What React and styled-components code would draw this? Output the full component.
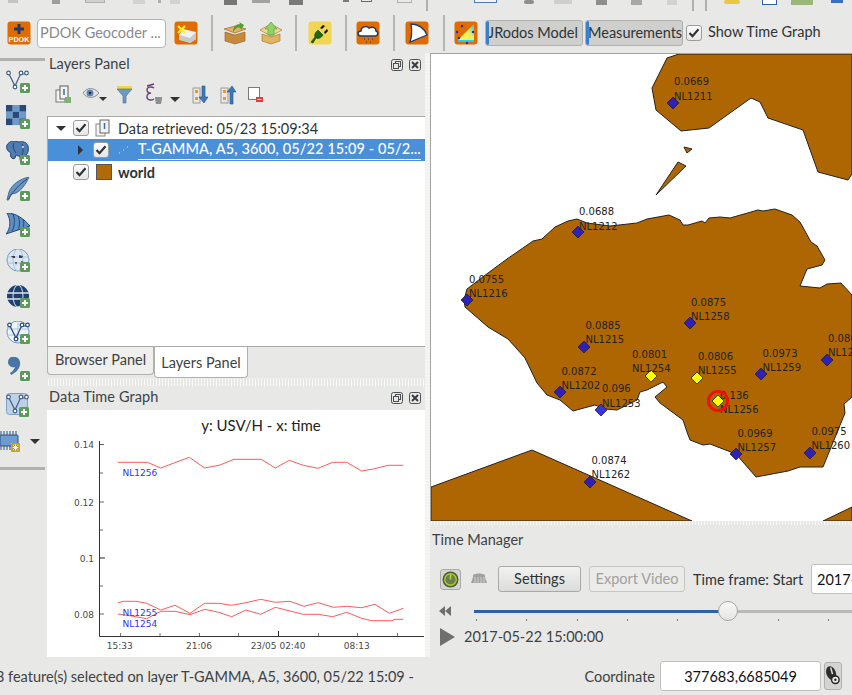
import React from 'react';
import styled, { createGlobalStyle } from 'styled-components';

const UI = '"Lato", "Open Sans", sans-serif';

const GlobalStyle = createGlobalStyle`
  html, body { margin: 0; padding: 0; background: #e8e8e7; }
  * { box-sizing: border-box; }
  body { font-family: ${UI}; font-size: 14.5px; color: #2e3436; }
`;

const Page = styled.div`
  width: 852px; height: 695px; display: flex; flex-direction: column;
  overflow: hidden; background: #e8e8e7;
`;

/* ---------- clipped toolbar on top ---------- */
const TopStrip = styled.div`
  height: 13px; display: flex; align-items: flex-start; overflow: hidden; flex: none;
`;
const StripItem = styled.div`
  flex: none; margin-left: ${p => p.$ml}px; width: ${p => p.$w}px; height: ${p => p.$h || 5}px;
  background: ${p => p.$bg || 'transparent'};
  border: ${p => (p.$line ? `1px solid ${p.$line}` : 'none')};
  border-top: none;
  border-radius: ${p => p.$r || 0}px;
`;

/* ---------- main toolbar ---------- */
const MainBar = styled.div`
  height: 40px; flex: none; display: flex; align-items: center; padding-left: 7px; overflow: hidden;
`;
const IconSlot = styled.div`
  flex: none; width: 24px; height: 24px; margin-left: ${p => p.$ml || 0}px;
`;
const ToolIcon = styled.svg`
  flex: none; width: ${p => p.$w || 24}px; height: 24px; margin-left: ${p => p.$ml || 0}px; display: block;
`;
const GeoInput = styled.div`
  flex: none; width: 129px; height: 29px; margin: 0 8px 0 6px; padding: 0 0 1px 2px;
  background: #fff; border: 1px solid #b5b5b3; border-radius: 4px;
  display: flex; align-items: center; color: #8a8a8a; font-size: 14.5px; white-space: nowrap;
  overflow: hidden;
`;
const BarSep = styled.div`
  flex: none; width: 2px; height: 36px; background: #b6b6b4; margin-left: ${p => p.$ml}px;
`;
const ToggleButton = styled.div`
  flex: none; width: 98px; height: 26px; margin-left: ${p => p.$ml}px; position: relative;
  background: #cfcfce; border: 1px solid #b0b0ae; border-radius: 3px;
  font-size: 14.5px; line-height: 23px; padding-left: 2px; white-space: nowrap; overflow: hidden; color: #2e3436;
  &::before {
    content: ''; position: absolute; left: 0; top: 0; bottom: 0; width: 3px;
    background: #3a7fc9; border-radius: 2px;
  }
`;
const CheckBox = styled.div`
  flex: none; width: 16px; height: 16px; margin-left: ${p => p.$ml || 0}px;
  background: linear-gradient(#fbfbfb, #e6e6e5); border: 1px solid #9c9c9a; border-radius: 3px;
  display: flex; align-items: center; justify-content: center;
`;
const BarLabel = styled.span`
  margin: -3px 0 0 6px; white-space: nowrap; font-size: 14.5px; color: #2e3436;
`;

/* ---------- workspace ---------- */
const Workspace = styled.div`
  flex: 1; min-height: 0; display: flex;
`;
const SideBar = styled.div`
  width: 45px; flex: none; margin-right: 2px; padding-top: 5px; display: flex; flex-direction: column;
`;
const SideRule = styled.div`
  height: 3px; flex: none; background: #b0b0ae; margin-bottom: ${p => p.$mb}px; margin-top: ${p => p.$mt || 0}px;
`;
const SideIcons = styled.div`
  display: flex; flex-direction: column; gap: 12px; padding-left: 6px;
`;
const ChipRow = styled.div`
  display: flex; align-items: center; height: 24px; margin-left: -6px;
`;
const ArrowDown = styled.div`
  width: 0; height: 0; flex: none; margin-left: ${p => p.$ml || 0}px; align-self: center;
  border-left: ${p => p.$s || 5}px solid transparent; border-right: ${p => p.$s || 5}px solid transparent;
  border-top: ${p => p.$s || 5}px solid #2e3436;
`;

const DockColumn = styled.div`
  width: 378px; flex: none; display: flex; flex-direction: column;
`;
const DockHeader = styled.div`
  height: 24px; flex: none; display: flex; align-items: center; padding: 0 4px 0 2px; color: #3d4244;
`;
const DockTitle = styled.span`
  flex: 1; font-size: 14.5px; white-space: nowrap; margin-top: -3px; letter-spacing: .1px;
`;
const DockButton = styled.svg`
  width: 12px; height: 12px; flex: none; margin-left: ${p => p.$ml || 0}px;
`;
const LayerTools = styled.div`
  height: 39px; flex: none; display: flex; align-items: flex-start; padding: 5px 0 0 8px;
`;
const TreeBox = styled.div`
  height: 231px; flex: none; background: #fff; border: 1px solid #a9a9a7; border-right: none;
`;
const TreeRow = styled.div`
  height: 22px; display: flex; align-items: center; padding-left: ${p => p.$indent}px;
  background: ${p => (p.$selected ? '#4a90d9' : 'transparent')};
  color: ${p => (p.$selected ? '#fff' : '#2e3436')};
  white-space: nowrap; overflow: hidden;
`;
const TreeArrow = styled.div`
  width: 0; height: 0; flex: none;
  ${p => (p.$open
    ? 'border-left:5px solid transparent;border-right:5px solid transparent;border-top:5px solid #2e3436;'
    : 'border-top:5px solid transparent;border-bottom:5px solid transparent;border-left:5px solid #2e3436;')}
`;
const TreeText = styled.span`
  font-size: 14.5px; margin-left: ${p => p.$ml}px; font-weight: ${p => (p.$bold ? 700 : 400)};
`;
const SelectedText = styled.span`
  font-size: 14.5px; margin-left: 8px; width: 283px; line-height: 18px; height: 20px; letter-spacing: .1px;
  border-bottom: 1px solid #fff; overflow: hidden; font-weight: 500;
`;
const Swatch = styled.div`
  width: 16px; height: 16px; flex: none; margin-left: 7px; background: #b06a08; border: 1px solid #555;
`;
const TabBar = styled.div`
  height: 31px; flex: none; display: flex; align-items: flex-start;
`;
const Tab = styled.div`
  height: ${p => (p.$active ? 31 : 28)}px; width: ${p => p.$w}px; flex: none;
  background: ${p => (p.$active ? '#fff' : '#efefee')};
  border: 1px solid #b0b0ae; border-top: none; border-radius: 0 0 4px 4px;
  display: flex; align-items: center; justify-content: center; font-size: 14.5px; white-space: nowrap;
  color: #3d4244; padding-bottom: ${p => (p.$active ? 0 : 2)}px;
`;
const HSplit = styled.div`
  height: ${p => p.$h}px; flex: none;
  background-image: radial-gradient(#f7f7f6 0.8px, transparent 0.9px);
  background-size: 3px 2px;
`;
const VSplit = styled.div`
  width: 5px; flex: none;
  background-image: radial-gradient(#f7f7f6 0.8px, transparent 0.9px);
  background-size: 2px 3px;
`;
const GraphBox = styled.div`
  height: 247px; flex: none; background: #fff;
`;
const Drawing = styled.svg`
  display: block;
`;
const GraphTitle = styled.text`
  font-family: ${UI}; font-size: 15px; fill: #222;
`;
const GraphTick = styled.text`
  font-family: "DejaVu Sans", sans-serif; font-size: 9px; fill: #4a4a4a;
`;
const GraphLabel = styled.text`
  font-family: "DejaVu Sans", sans-serif; font-size: 9px; fill: #3232ff;
`;
const MapLabel = styled.text`
  font-family: "DejaVu Sans", sans-serif; font-size: 10px; fill: #222;
`;

/* ---------- right column ---------- */
const RightColumn = styled.div`
  flex: 1; min-width: 0; display: flex; flex-direction: column; overflow: hidden;
`;
const MapFrame = styled.div`
  height: 468px; flex: none; background: #fff;
  border-top: 1px solid #a4a4a2; border-left: 1px solid #a4a4a2; overflow: hidden;
`;
const TimeManager = styled.div`
  flex: 1; min-height: 0; display: flex; flex-direction: column;
`;
const TimeTitle = styled.div`
  height: 30px; flex: none; display: flex; align-items: center; padding: 0 0 2px 2px; font-size: 14.5px; color: #3d4244;
`;
const TimeRow = styled.div`
  height: 30px; flex: none; margin-top: 9px; display: flex; align-items: center; padding-left: 10px; white-space: nowrap;
`;
const PowerButton = styled.div`
  width: 21px; height: 21px; flex: none; background: #d4d4d2; border: 1px solid #aaa; border-radius: 3px;
  display: flex; align-items: center; justify-content: center;
`;
const PushButton = styled.div`
  height: 26px; flex: none; width: ${p => p.$w}px; margin-left: ${p => p.$ml}px;
  border: 1px solid ${p => (p.$disabled ? '#c6c6c4' : '#a9a9a7')}; border-radius: 3px;
  background: ${p => (p.$disabled ? '#ebebea' : 'linear-gradient(#f2f2f1, #dcdcda)')};
  color: ${p => (p.$disabled ? '#a0a0a0' : '#2e3436')};
  display: flex; align-items: center; justify-content: center; font-size: 14.5px; padding-bottom: 1px;
`;
const TimeLabel = styled.span`
  margin-left: 8px; font-size: 14.5px; color: #2e3436; width: 111px; flex: none;
`;
const DateInput = styled.div`
  flex: none; width: 100px; height: 30px; margin-left: 7px; background: #fff;
  border: 1px solid #c0c0be; border-radius: 3px; display: flex; align-items: center; padding-left: 5px; font-size: 14.5px; color: #111;
`;
const SliderRow = styled.div`
  height: 32px; flex: none; padding-left: 9px; padding-top: 12px;
`;
const SliderLine = styled.div`
  display: flex; align-items: center; height: 10px;
`;
const Track = styled.div`
  flex: 1; margin-left: 23px; height: 3px; position: relative; background: #b9b9b7;
`;
const TrackFill = styled.div`
  height: 3px; width: ${p => p.$w}px; background: #2c63a8;
`;
const Handle = styled.div`
  position: absolute; left: ${p => p.$x}px; top: -9px; width: 20px; height: 20px; border-radius: 50%;
  background: linear-gradient(#f8f8f7, #e4e4e3); border: 1px solid #a6a6a4;
`;
const Ticks = styled.div`
  display: flex; gap: 49.3px; margin: 3px 0 0 37px;
`;
const Tick = styled.div`
  width: 1px; height: 2px; flex: none; background: #777;
`;
const PlayRow = styled.div`
  height: 21px; flex: none; display: flex; align-items: center; padding-left: 10px;
`;
const PlayTriangle = styled.div`
  width: 0; height: 0; flex: none; margin-right: 9px;
  border-top: 9px solid transparent; border-bottom: 9px solid transparent; border-left: 15px solid #6f6f6d;
`;
const TimeStamp = styled.span`
  font-size: 14.5px; color: #3d4244; white-space: nowrap; margin-top: -1px;
`;

/* ---------- status ---------- */
const StatusBar = styled.div`
  height: 38px; flex: none; display: flex; align-items: center; padding-right: 10px; white-space: nowrap; overflow: hidden;
`;
const StatusText = styled.span`
  margin-left: -4px; font-size: 14.5px; color: #3d4244;
`;
const CoordLabel = styled.span`
  margin-left: auto; font-size: 14.5px; color: #3d4244;
`;
const CoordInput = styled.div`
  width: 161px; height: 30px; margin: 0 3px 0 5px; flex: none; background: #fff;
  border: 1px solid #c0c0be; border-radius: 3px; display: flex; align-items: center; justify-content: center;
  font-size: 14.5px; color: #111;
`;
const MouseButton = styled.div`
  width: 18px; height: 28px; flex: none; background: #d4d4d2; border: 1px solid #b0b0ae; border-radius: 3px;
  display: flex; align-items: center; justify-content: center;
`;

/* ---------- icons ---------- */
const Plus = ({ dx = 14, dy = 14 }) => (
  <g transform={`translate(${dx} ${dy})`}>
    <rect width="10" height="10" rx="1.5" fill="#5e9a5c" />
    <path d="M5 2v6M2 5h6" stroke="#fff" strokeWidth="2" />
  </g>
);
const VShape = ({ c = '#3f5f86' }) => (
  <g fill="none" stroke={c} strokeWidth="1.2">
    <path d="M3 5l6 12 5.5-12h5" />
    <circle cx="2.5" cy="4" r="1.8" fill="#fff" />
    <circle cx="9" cy="18" r="1.8" fill="#fff" />
    <circle cx="15" cy="4" r="1.8" fill="#fff" />
    <circle cx="20.5" cy="4" r="1.8" fill="#fff" />
  </g>
);
const Side = ({ children }) => <ToolIcon viewBox="0 0 24 24">{children}</ToolIcon>;
const IconV = () => <Side><VShape /><Plus /></Side>;
const IconRaster = () => (
  <Side>
    {[0, 1, 2].flatMap(r => [0, 1, 2].map(c => (
      <rect key={`${r}${c}`} x={c * 6.7} y={r * 6.7} width="6.7" height="6.7"
        fill={(r + c) % 2 === 0 ? '#274a78' : '#6d9acb'} />
    )))}
    <Plus />
  </Side>
);
const IconPg = () => (
  <Side>
    <path d="M7 0c3 0 5 1 6 1 3-1 8 0 9 4 1 4 0 7-2 9l-2 1c0 3 0 6-2 6s-2-3-2-6c-2 0-3 0-4-1l-1 3c-1 1-3 1-4-1-1-1 0-3-1-5C1 10 0 7 1 4c1-2 4-4 6-4z" fill="#4f7db2" stroke="#24436e" />
    <path d="M8 2c-2 4 0 7 2 10M16 3c2 4 1 8 0 11" stroke="#24436e" fill="none" />
    <circle cx="17" cy="6" r="1" fill="#dbe6f2" />
    <Plus />
  </Side>
);
const IconFeather = () => (
  <Side>
    <path d="M23 0C14 2 6 7 3 15l-2 8 1.5 0 2.5-6c7 0 13-6 18-17z" fill="#6b96c4" stroke="#2f5686" strokeWidth=".8" />
    <path d="M2.5 22C8 13 14 7 21 2" stroke="#23487c" fill="none" />
    <Plus />
  </Side>
);
const IconMesh = () => (
  <Side>
    <path d="M1 0c9 0 17 6 23 13L0 21C5 15 5 7 1 0z" fill="#5d8fc5" stroke="#23487c" />
    <path d="M7 1c2 5 2 12-1 17M12 3c2 4 2 10 0 14M17 6c1 3 1 6 0 9" stroke="#23487c" fill="none" />
    <Plus />
  </Side>
);
const IconWms = () => (
  <Side>
    <circle cx="12" cy="11" r="11" fill="#dce7f3" stroke="#6d9acb" />
    <path d="M1 8h22M1 14h22" stroke="#a9c4e2" />
    <ellipse cx="12" cy="11" rx="5" ry="11" fill="none" stroke="#a9c4e2" />
    <path d="M5 7h4v2H7zM13 6l4 1-1 2h-3zM9 13h2l-1 3zM15 12h2l-1 2z" fill="#3b4046" />
    <Plus dy={13} />
  </Side>
);
const IconGlobe = () => (
  <Side>
    <circle cx="12" cy="11" r="11" fill="#1f3f6e" />
    <path d="M1 8h22M1 14h22" stroke="#d8e4f2" strokeWidth="1.5" />
    <ellipse cx="12" cy="11" rx="5" ry="11" fill="none" stroke="#d8e4f2" />
    <Plus dy={13} />
  </Side>
);
const IconWfs = () => (
  <Side>
    <circle cx="12" cy="11" r="11" fill="#eef4fa" stroke="#6d9acb" />
    <path d="M1 8h22M1 14h22M12 0v22" stroke="#a9c4e2" />
    <g transform="translate(1 0)"><VShape c="#23487c" /></g>
    <Plus dy={13} />
  </Side>
);
const IconComma = () => (
  <Side>
    <path d="M6 0c5-1 9 2 8 8-1 5-5 8-9 10l-1-2c2-1 4-3 5-6C6 11 2 9 2 5c0-3 2-5 4-5z" fill="#4a74a5" />
    <Plus dy={14} />
  </Side>
);
const IconVBox = () => (
  <Side>
    <rect x=".5" y=".5" width="21" height="21" rx="3" fill="#bcd0e6" stroke="#7f9fc4" />
    <VShape c="#3f5f86" />
    <Plus dy={14} dx={13} />
  </Side>
);
const IconChip = () => (
  <ToolIcon $w={26} viewBox="0 0 26 24">
    <rect x="0" y="6" width="18" height="11" rx="1" fill="#6c9bd0" stroke="#2c507f" />
    <path d="M1 2v4M4 2v4M7 2v4M10 2v4M13 2v4M16 2v4M1 17v4M4 17v4M7 17v4M10 17v4M13 17v4" stroke="#2c507f" />
    <rect x="11" y="14" width="9" height="9" rx="1" fill="#cfa11c" />
    <path d="M15.5 15.5v6M12.7 18.5h5.6M13.5 16.5l4 4M17.5 16.5l-4 4" stroke="#fff" />
  </ToolIcon>
);

const Orange = ({ fill = '#e06c00' }) => <rect x=".5" y=".5" width="23" height="23" rx="3" fill={fill} />;
const IconPdok = () => (
  <ToolIcon viewBox="0 0 24 24">
    <Orange />
    <path d="M12 3v10M7 8h10" stroke="#23386a" strokeWidth="3" />
    <text x="12" y="21" textAnchor="middle" fontFamily="Liberation Sans" fontWeight="700" fontSize="7.2" fill="#fff">PDOK</text>
  </ToolIcon>
);
const IconClear = () => (
  <ToolIcon viewBox="0 0 24 24">
    <Orange />
    <path d="M5 14l4-6 13 3v7l-6 4z" fill="#f1f1f1" />
    <path d="M5 14l11 3 6-6v7l-6 4-11-3z" fill="#c9c9c9" />
    <path d="M4 5l7 7M11 5l-7 7" stroke="#ffee22" strokeWidth="2.4" />
  </ToolIcon>
);
const IconBoxOpen = () => (
  <ToolIcon viewBox="0 0 24 24">
    <path d="M2 11l10 3 10-3v9l-10 3-10-3z" fill="#c78a3a" stroke="#8a5a1c" strokeWidth=".6" />
    <path d="M1 8l11-3 11 3-11 4z" fill="#e3b06a" stroke="#8a5a1c" strokeWidth=".6" />
    <path d="M10 11c0-5 3-8 7-8l-1-2 5 3-3 5-1-3c-3 0-5 2-7 5z" fill="#4ea02e" />
  </ToolIcon>
);
const IconBoxUp = () => (
  <ToolIcon viewBox="0 0 24 24">
    <path d="M3 13l9 3 9-3v7l-9 3-9-3z" fill="#e2b460" stroke="#9b6f24" strokeWidth=".6" />
    <path d="M1 9l11-6 11 6-11 6z" fill="#f4d48e" stroke="#9b6f24" strokeWidth=".6" />
    <path d="M12 1l6 7h-3v6H9V8H6z" fill="#8ed36a" stroke="#4c9a2c" strokeWidth=".6" />
  </ToolIcon>
);
const IconPlug = () => (
  <ToolIcon viewBox="0 0 24 24">
    <Orange fill="#f0d652" />
    <path d="M3 21l4-5c-1-3 1-5 3-7l5 5c-2 3-4 4-7 3l-3 5z" fill="#1c6a18" stroke="#0c3a0a" strokeWidth=".6" />
    <path d="M12 7l3-3 2 1-3 3zM16 11l3-3 1 2-3 3z" fill="#111" />
  </ToolIcon>
);
const IconCloud = () => (
  <ToolIcon viewBox="0 0 24 24">
    <Orange />
    <path d="M5 15c-4 0-4-5 0-5 0-4 5-6 8-3 4-2 7 0 7 3 3 1 2 5-1 5z" fill="#fff" stroke="#1d3a6e" strokeWidth="1.5" />
    <path d="M8 18h1M12 18h1M16 18h1M10 21h1M14 21h1" stroke="#1d3a6e" strokeWidth="1.2" />
  </ToolIcon>
);
const IconFan = () => (
  <ToolIcon viewBox="0 0 24 24">
    <Orange />
    <path d="M6 3c7 0 13 4 16 11L5 21C7 15 7 9 6 3z" fill="#fff" stroke="#1d3a6e" strokeWidth="1.3" />
  </ToolIcon>
);
const IconJRodos = () => (
  <ToolIcon viewBox="0 0 24 24">
    <defs>
      <linearGradient id="jr" x1="0" y1="1" x2="1" y2="0">
        <stop offset="0" stopColor="#ffff33" />
        <stop offset=".55" stopColor="#e8f060" />
        <stop offset="1" stopColor="#43b7e8" />
      </linearGradient>
    </defs>
    <Orange />
    <path d="M4 19L20 3v16z" fill="url(#jr)" />
    <path d="M4 19h16v2H4z" fill="#22ccff" />
    <g fill="#2a22c8">
      <circle cx="8" cy="5" r="1.2" /><circle cx="3" cy="11" r="1.2" /><circle cx="19" cy="11" r="1.2" />
      <circle cx="13" cy="22" r="1.2" /><circle cx="5" cy="17" r="1.2" />
    </g>
  </ToolIcon>
);
const Check = () => (
  <svg width="12" height="12" viewBox="0 0 12 12">
    <path d="M1.5 6l3 3.2 6-7" fill="none" stroke="#2e3436" strokeWidth="2.2" />
  </svg>
);
const FloatBtn = ({ ml }) => (
  <DockButton $ml={ml} viewBox="0 0 12 12">
    <rect x=".5" y=".5" width="11" height="11" rx="2" fill="none" stroke="#4c5052" />
    <rect x="4.5" y="2.5" width="5" height="5" fill="none" stroke="#4c5052" />
    <rect x="2.5" y="4.5" width="5" height="5" fill="#e8e8e7" stroke="#4c5052" />
  </DockButton>
);
const CloseBtn = ({ ml }) => (
  <DockButton $ml={ml} viewBox="0 0 12 12">
    <rect x=".5" y=".5" width="11" height="11" rx="2" fill="none" stroke="#4c5052" />
    <path d="M3 3l6 6M9 3l-6 6" stroke="#3a3d3f" strokeWidth="2" />
  </DockButton>
);
const IconGroup = ({ ml }) => (
  <ToolIcon $ml={ml} $w={16} viewBox="0 0 16 24">
    <rect x="1" y="8" width="9" height="12" fill="#f4f4f4" stroke="#777" />
    <rect x="5" y="4" width="8" height="13" fill="#f4f4f4" stroke="#5a5a5a" />
    <path d="M9 7v6" stroke="#3a6ea8" strokeWidth="1.5" />
    <rect x="10" y="15" width="6" height="6" fill="#7fb46e" />
  </ToolIcon>
);
const IconEye = ({ ml }) => (
  <ToolIcon $ml={ml} $w={16} viewBox="0 0 16 24">
    <path d="M0 11c4-6 11-6 16 0-5 6-12 6-16 0z" fill="#dfe5ea" stroke="#8a8f93" />
    <circle cx="7" cy="11" r="3.5" fill="#5f87b5" />
    <circle cx="7" cy="11" r="1.3" fill="#1f3040" />
  </ToolIcon>
);
const IconFilter = ({ ml }) => (
  <ToolIcon $ml={ml} $w={15} viewBox="0 0 15 24">
    <path d="M0 4h15v3H0z" fill="#f2d83c" />
    <path d="M0 7h15L9 14v7H6v-7z" fill="#6a9ac8" stroke="#3f6c9c" strokeWidth=".6" />
  </ToolIcon>
);
const IconEps = ({ ml }) => (
  <ToolIcon $ml={ml} $w={16} viewBox="0 0 16 24">
    <path d="M8 6C5 4 1 5 1 8c0 2 2 3 4 3-3 0-4 2-4 4 0 3 4 4 7 2M1 4l7-2" fill="none" stroke="#6a3c7c" strokeWidth="1.4" />
    <path d="M9 15h7v2l-1 5h-5l-1-5z" fill="#8e9194" />
  </ToolIcon>
);
const IconOrder = ({ ml, up }) => (
  <ToolIcon $ml={ml} $w={16} viewBox="0 0 16 24">
    <rect x="1" y="6" width="7" height="15" fill="none" stroke="#9a9a9a" />
    <rect x="3" y="8" width="3" height="3" fill="#e89a2c" /><rect x="3" y="15" width="3" height="3" fill="#e89a2c" />
    <path d={up ? 'M10 22V10H7l5-6 4 6h-3v12z' : 'M10 4v11H7l5 6 4-6h-3V4z'} fill="#3f78b8" stroke="#24507f" strokeWidth=".6" />
  </ToolIcon>
);
const IconNoSel = ({ ml }) => (
  <ToolIcon $ml={ml} $w={15} viewBox="0 0 15 24">
    <rect x=".5" y="5.5" width="11" height="12" fill="#fff" stroke="#7a7a7a" />
    <rect x="8" y="15" width="7" height="5" fill="#e23b3b" />
    <path d="M9.5 17.5h4" stroke="#fff" />
  </ToolIcon>
);
const IconPower = () => (
  <svg width="17" height="17" viewBox="0 0 17 17">
    <circle cx="8.5" cy="8.5" r="8" fill="#4e5a38" />
    <circle cx="8.5" cy="8.5" r="5.8" fill="#6f7b50" stroke="#a8d030" strokeWidth="1.4" />
    <path d="M8.5 3.5v5" stroke="#a8e030" strokeWidth="1.6" />
  </svg>
);
const IconArchive = ({ ml }) => (
  <ToolIcon $ml={ml} $w={18} viewBox="0 0 18 24">
    <path d="M3 8c3-2 9-2 12 0v2H3zM1 16l2-6h12l2 6z" fill="#a2a2a0" />
    <path d="M5 10v6M8 10v6M11 10v6M14 10v6" stroke="#d0d0ce" />
  </ToolIcon>
);
const IconRewind = () => (
  <svg width="12" height="10" viewBox="0 0 12 10">
    <path d="M6 0v10L0 5zM12 0v10L6 5z" fill="#6f6f6d" />
  </svg>
);
const IconMouse = () => (
  <svg width="17" height="24" viewBox="0 0 17 24">
    <ellipse cx="6.5" cy="9" rx="5" ry="7.5" transform="rotate(-20 6.5 9)" fill="#2d2d2d" />
    <path d="M6 3l2 7" stroke="#ddd" strokeWidth="1.6" />
    <circle cx="11" cy="16" r="4" fill="#eee" stroke="#222" strokeWidth="1.5" />
    <circle cx="11" cy="16" r="1.3" fill="#222" />
  </svg>
);

/* ---------- data ---------- */
const STRIP = [
  { ml: 8, w: 10, bg: '#c4c4c2', h: 3 }, { ml: 34, w: 8, bg: '#9e9e9c', h: 4 }, { ml: 25, w: 20, bg: '#d2d2d0', h: 3, line: '#b0b0ae' },
  { ml: 28, w: 12, bg: '#d2d2d0', h: 4 }, { ml: 13, w: 3, bg: '#b0b0ae', h: 3 }, { ml: 9, w: 10, bg: '#d2d2d0', h: 4 },
  { ml: 44, w: 13, bg: '#777775', h: 5 }, { ml: 15, w: 18, bg: '#a2a2a0', h: 3 }, { ml: 19, w: 14, bg: '#7a7a78', h: 5 },
  { ml: 40, w: 6, bg: '#7a7a78', h: 2 }, { ml: 12, w: 11, h: 2, line: '#6a6a68' }, { ml: 25, w: 15, h: 3, line: '#b0b0ae' },
  { ml: 14, w: 2, bg: '#b0b0ae', h: 11 },
  { ml: 46, w: 23, h: 3, line: '#4a7cc0', bg: '#f4f4f4' }, { ml: 27, w: 10, bg: '#8e8e8c', h: 4, r: 5 }, { ml: 20, w: 18, bg: '#cfcfcd', h: 4 },
  { ml: 24, w: 11, bg: '#8e8e8c', h: 5 }, { ml: 24, w: 11, bg: '#a8a8a6', h: 5 }, { ml: 25, w: 10, bg: '#d2d2d0', h: 5 },
  { ml: 15, w: 2, bg: '#b0b0ae', h: 11 }, { ml: 11, w: 2, bg: '#b0b0ae', h: 11 },
  { ml: 17, w: 16, bg: '#e8c840', h: 4, r: 3 }, { ml: 22, w: 15, h: 5, line: '#2e62a6', bg: '#fff' }, { ml: 14, w: 22, bg: '#9ab87a', h: 5 }, { ml: 18, w: 12, bg: '#3a6ec0', h: 3 },
];

const POINTS = [
  { n: 'NL1211', v: '0.0669', x: 673, y: 103, lx: 674, vy: 85, ny: 100 },
  { n: 'NL1212', v: '0.0688', x: 578, y: 232, lx: 579, vy: 214.5, ny: 229.5 },
  { n: 'NL1216', v: '0.0755', x: 467, y: 300, lx: 469, vy: 282.5, ny: 296.5 },
  { n: 'NL1215', v: '0.0885', x: 584, y: 347, lx: 585.5, vy: 328.5, ny: 342.5 },
  { n: 'NL1202', v: '0.0872', x: 560, y: 392, lx: 561.5, vy: 374.5, ny: 388.5 },
  { n: 'NL1253', v: '0.096', x: 601, y: 410, lx: 602, vy: 392, ny: 406.5, hi: true },
  { n: 'NL1254', v: '0.0801', x: 651, y: 376, lx: 632, vy: 357.5, ny: 371.5, yellow: true },
  { n: 'NL1262', v: '0.0874', x: 590, y: 482, lx: 591.5, vy: 464, ny: 478 },
  { n: 'NL1258', v: '0.0875', x: 690, y: 323, lx: 691, vy: 305.5, ny: 319.5 },
  { n: 'NL1255', v: '0.0806', x: 697, y: 378, lx: 698, vy: 360, ny: 374, yellow: true },
  { n: 'NL1259', v: '0.0973', x: 761, y: 374, lx: 762.5, vy: 356.5, ny: 370.5 },
  { n: 'NL1261', v: '0.0805', x: 827, y: 360, lx: 828, vy: 341.5, ny: 355.5 },
  { n: 'NL1256', v: '0.136', x: 718, y: 401, lx: 720, vy: 398.5, ny: 412.5, yellow: true, ring: true },
  { n: 'NL1257', v: '0.0969', x: 736, y: 454, lx: 737.5, vy: 436.5, ny: 450.5 },
  { n: 'NL1260', v: '0.0975', x: 810, y: 453, lx: 811.5, vy: 435, ny: 449 },
];

const POLYS = [
  '679,54 667,58 652,88 656,110 681,131 709,128 751,98 760,102 768,118 803,130 818,172 848,180 852,174 852,54',
  '684,147 692,149 687,153',
  '678,162 686,166 656,195',
  '464,300 467,289 488,273 507,259 533,241 542,239 555,227 568,221 577,219 587,223 610,226 637,223 647,219 669,215 680,220 683,225 688,225 702,221 705,223 709,218 720,217 730,218 758,210 763,211 775,209 792,215 800,222 811,242 817,246 825,260 822,265 807,269 800,286 820,288 827,284 841,283 852,295 852,397 844,404 845,413 823,467 800,467 788,471 756,477 736,454 710,444 703,445 690,440 687,432 683,420 660,403 655,397 667,387 663,382 647,390 640,392 637,400 617,410 605,409 595,405 573,411 560,400 547,395 537,383 525,358 508,339 488,327 465,307',
  '431,487 532,450 692,521 431,521',
  '823,521 852,507 852,521',
];

const toPts = (arr, ox, oy) => arr.map(([x, y]) => `${(ox + x / 3).toFixed(1)},${(oy + y / 3).toFixed(1)}`).join(' ');
const S1 = [[234,367],[322,367],[362,384],[448,352],[494,384],[540,375],[582,358],[664,358],[706,384],[748,361],[790,376],[834,385],[878,367],[920,367],[965,393],[1000,387],[1044,376],[1090,376]];
const S2 = [[234,128],[250,124],[288,124],[320,130],[362,150],[405,136],[450,160],[494,130],[536,130],[575,136],[618,128],[662,118],[706,127],[750,124],[792,139],[835,128],[880,142],[920,139],[965,143],[1005,133],[1048,160],[1090,145]];
const S3 = [[234,162],[275,168],[320,176],[362,154],[405,154],[450,164],[494,148],[536,157],[575,170],[618,150],[662,163],[706,142],[750,153],[790,163],[835,163],[878,170],[920,157],[965,175],[995,182],[1055,182],[1065,178],[1090,178]];

const MapDrawing = () => (
  <Drawing width="421" height="467" viewBox="431 54 421 467">
    {POLYS.map((p, i) => <polygon key={i} points={p} fill="#ae6603" stroke="#222" strokeWidth="1" />)}
    {POINTS.map(p => (
      <polygon key={p.n} points={`${p.x},${p.y - 6} ${p.x + 6},${p.y} ${p.x},${p.y + 6} ${p.x - 6},${p.y}`}
        fill={p.yellow ? '#ffff00' : p.hi ? '#3a34dc' : '#3120b8'} stroke="#222" strokeWidth=".8" />
    ))}
    {POINTS.map(p => (
      <g key={`t${p.n}`}>
        <MapLabel x={p.lx} y={p.vy}>{p.v}</MapLabel>
        <MapLabel x={p.lx} y={p.ny}>{p.n}</MapLabel>
      </g>
    ))}
    <circle cx="718" cy="401" r="9.5" fill="none" stroke="#ee1111" strokeWidth="3" />
  </Drawing>
);

const GraphDrawing = () => (
  <Drawing width="377" height="247" viewBox="47 410 377 247">
    <GraphTitle x="261" y="431" textAnchor="middle">y: USV/H - x: time</GraphTitle>
    <path d="M99.5 441V636.5H424" fill="none" stroke="#333" />
    {[[444.5, 4], [473, 3], [502, 4], [530, 3], [558, 5], [586, 3], [614, 4]].map(([y, l]) => (
      <path key={y} d={`M100 ${y}h${l}`} stroke={l === 5 ? '#222' : '#666'} />
    ))}
    {[[120.5, 3], [160, 3], [199.5, 3], [238.5, 3], [278.5, 5], [318.5, 3], [357.5, 3], [397.5, 3]].map(([x, l]) => (
      <path key={x} d={`M${x} 636v-${l}`} stroke={l === 5 ? '#222' : '#777'} />
    ))}
    {[['0.14', 448], ['0.12', 505.5], ['0.1', 561.5], ['0.08', 617.5]].map(([t, y]) => (
      <GraphTick key={t} x="94" y={y} textAnchor="end">{t}</GraphTick>
    ))}
    {[['15:33', 119.7], ['21:06', 199], ['23/05 02:40', 278], ['08:13', 356.8]].map(([t, x]) => (
      <GraphTick key={t} x={x} y="648.5" textAnchor="middle">{t}</GraphTick>
    ))}
    <g fill="none" stroke="#ff5a5a">
      <polyline points={toPts(S1, 40, 340)} />
      <polyline points={toPts(S2, 40, 560)} />
      <polyline points={toPts(S3, 40, 560)} />
    </g>
    <GraphLabel x="122.5" y="476">NL1256</GraphLabel>
    <GraphLabel x="122.5" y="616">NL1255</GraphLabel>
    <GraphLabel x="122.5" y="626.5">NL1254</GraphLabel>
  </Drawing>
);

export default function App() {
  return (
    <Page>
      <GlobalStyle />
      <TopStrip>
        {STRIP.map((s, i) => (
          <StripItem key={i} $ml={s.ml} $w={s.w} $h={s.h} $bg={s.bg} $line={s.line} $r={s.r} />
        ))}
      </TopStrip>

      <MainBar>
        <IconPdok />
        <GeoInput>PDOK Geocoder ...</GeoInput>
        <IconClear />
        <BarSep $ml={13} />
        <IconSlot $ml={10}><IconBoxOpen /></IconSlot>
        <IconSlot $ml={12}><IconBoxUp /></IconSlot>
        <BarSep $ml={12} />
        <IconSlot $ml={11}><IconPlug /></IconSlot>
        <BarSep $ml={13} />
        <IconSlot $ml={9}><IconCloud /></IconSlot>
        <BarSep $ml={13} />
        <IconSlot $ml={10}><IconFan /></IconSlot>
        <BarSep $ml={14} />
        <IconSlot $ml={9}><IconJRodos /></IconSlot>
        <ToggleButton $ml={7}>JRodos Model</ToggleButton>
        <ToggleButton $ml={2}>Measurements</ToggleButton>
        <CheckBox $ml={3}><Check /></CheckBox>
        <BarLabel>Show Time Graph</BarLabel>
      </MainBar>

      <Workspace>
        <SideBar>
          <SideRule $mb={8} />
          <SideIcons>
            <IconV /><IconRaster /><IconPg /><IconFeather /><IconMesh /><IconWms />
            <IconGlobe /><IconWfs /><IconComma /><IconVBox />
            <ChipRow><IconChip /><ArrowDown $ml={4} /></ChipRow>
          </SideIcons>
          <SideRule $mb={0} $mt={14} />
        </SideBar>

        <DockColumn>
          <DockHeader>
            <DockTitle>Layers Panel</DockTitle>
            <FloatBtn /><CloseBtn ml={6} />
          </DockHeader>
          <LayerTools>
            <IconGroup />
            <IconEye ml={12} />
            <ArrowDown $s={4} />
            <IconFilter ml={10} />
            <IconEps ml={14} />
            <ArrowDown $ml={8} />
            <IconOrder ml={12} />
            <IconOrder ml={12} up />
            <IconNoSel ml={12} />
          </LayerTools>
          <TreeBox>
            <TreeRow $indent={8}>
              <TreeArrow $open />
              <CheckBox $ml={7}><Check /></CheckBox>
              <ToolIcon $w={16} $ml={6} viewBox="0 0 16 24">
                <rect x="1" y="8" width="9" height="12" fill="#f4f4f4" stroke="#888" />
                <rect x="5" y="4" width="9" height="13" fill="#f4f4f4" stroke="#666" />
                <path d="M9.5 7v6" stroke="#3a6ea8" strokeWidth="1.5" />
              </ToolIcon>
              <TreeText $ml={7}>Data retrieved: 05/23 15:09:34</TreeText>
            </TreeRow>
            <TreeRow $indent={30} $selected>
              <TreeArrow />
              <CheckBox $ml={10}><Check /></CheckBox>
              <ToolIcon $w={13} $ml={8} viewBox="0 0 13 24">
                <path d="M2 15h1M6 12h1M10 9h1" stroke="#cfe0f4" />
              </ToolIcon>
              <SelectedText>T-GAMMA, A5, 3600, 05/22 15:09 - 05/2...</SelectedText>
            </TreeRow>
            <TreeRow $indent={25}>
              <CheckBox><Check /></CheckBox>
              <Swatch />
              <TreeText $ml={6} $bold>world</TreeText>
            </TreeRow>
          </TreeBox>
          <TabBar>
            <Tab $w={107}>Browser Panel</Tab>
            <Tab $w={94} $active>Layers Panel</Tab>
          </TabBar>
          <HSplit $h={8} />
          <DockHeader>
            <DockTitle>Data Time Graph</DockTitle>
            <FloatBtn /><CloseBtn ml={6} />
          </DockHeader>
          <GraphBox><GraphDrawing /></GraphBox>
        </DockColumn>

        <VSplit />

        <RightColumn>
          <MapFrame><MapDrawing /></MapFrame>
          <HSplit $h={4} />
          <TimeManager>
            <TimeTitle>Time Manager</TimeTitle>
            <TimeRow>
              <PowerButton><IconPower /></PowerButton>
              <IconArchive ml={9} />
              <PushButton $w={83} $ml={10}>Settings</PushButton>
              <PushButton $w={96} $ml={8} $disabled>Export Video</PushButton>
              <TimeLabel>Time frame: Start</TimeLabel>
              <DateInput>2017-05-22</DateInput>
            </TimeRow>
            <SliderRow>
              <SliderLine>
                <IconRewind />
                <Track>
                  <TrackFill $w={246} />
                  <Handle $x={244} />
                </Track>
              </SliderLine>
              <Ticks>
                {Array.from({ length: 8 }, (_, i) => <Tick key={i} />)}
              </Ticks>
            </SliderRow>
            <PlayRow>
              <PlayTriangle />
              <TimeStamp>2017-05-22 15:00:00</TimeStamp>
            </PlayRow>
          </TimeManager>
        </RightColumn>
      </Workspace>

      <StatusBar>
        <StatusText>3 feature(s) selected on layer T-GAMMA, A5, 3600, 05/22 15:09 -</StatusText>
        <CoordLabel>Coordinate</CoordLabel>
        <CoordInput>377683,6685049</CoordInput>
        <MouseButton><IconMouse /></MouseButton>
      </StatusBar>
    </Page>
  );
}
